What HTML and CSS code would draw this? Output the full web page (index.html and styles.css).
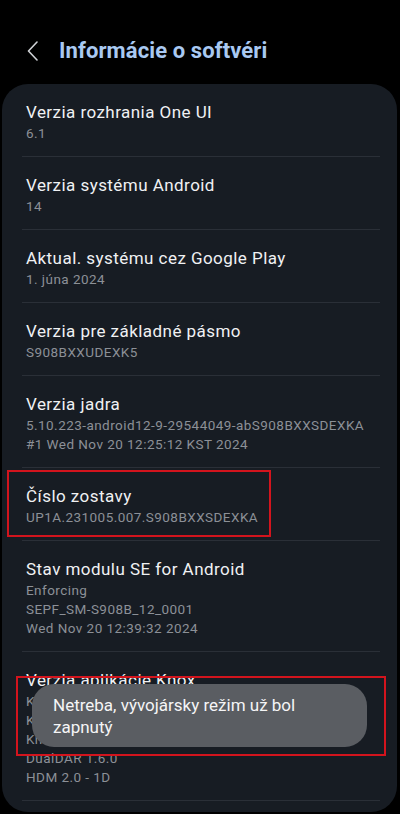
FILE: index.html
```html
<!DOCTYPE html>
<html>
<head>
    <meta charset="UTF-8">
    <meta name="viewport" content="width=device-width, initial-scale=1.0">
    <title>Informácie o softvéri</title>
    <link rel="stylesheet" href="styles.css">
</head>
<body>
    <header class="top-bar">
        <button class="back-btn" aria-label="Späť">
            <svg width="12" height="20" viewBox="0 0 12 20">
                <polyline points="10,1 1.5,10 10,19" fill="none" stroke="#cfd2d6" stroke-width="1.6" stroke-linecap="round" stroke-linejoin="round"/>
            </svg>
        </button>
        <h1 class="page-title">Informácie o softvéri</h1>
    </header>

    <div class="info-card">
        <div class="info-row">
            <div class="row-title">Verzia rozhrania One UI</div>
            <div class="row-value">6.1</div>
        </div>
        <div class="info-row">
            <div class="row-title">Verzia systému Android</div>
            <div class="row-value">14</div>
        </div>
        <div class="info-row">
            <div class="row-title">Aktual. systému cez Google Play</div>
            <div class="row-value">1. júna 2024</div>
        </div>
        <div class="info-row">
            <div class="row-title">Verzia pre základné pásmo</div>
            <div class="row-value">S908BXXUDEXK5</div>
        </div>
        <div class="info-row">
            <div class="row-title">Verzia jadra</div>
            <div class="row-value">5.10.223-android12-9-29544049-abS908BXXSDEXKA</div>
            <div class="row-value">#1 Wed Nov 20 12:25:12 KST 2024</div>
        </div>
        <div class="info-row">
            <div class="row-title">Číslo zostavy</div>
            <div class="row-value">UP1A.231005.007.S908BXXSDEXKA</div>
        </div>
        <div class="info-row">
            <div class="row-title">Stav modulu SE for Android</div>
            <div class="row-value">Enforcing</div>
            <div class="row-value">SEPF_SM-S908B_12_0001</div>
            <div class="row-value">Wed Nov 20 12:39:32 2024</div>
        </div>
        <div class="info-row">
            <div class="row-title">Verzia aplikácie Knox</div>
            <div class="row-value">Knox 3.10</div>
            <div class="row-value">Knox API level 37</div>
            <div class="row-value">Knox ML 1.5</div>
            <div class="row-value">DualDAR 1.6.0</div>
            <div class="row-value">HDM 2.0 - 1D</div>
        </div>
    </div>

    <!-- annotation boxes -->
    <div class="mark mark-build"></div>
    <div class="mark mark-toast"></div>

    <div class="toast">Netreba, vývojársky režim už bol zapnutý</div>
</body>
</html>
```

FILE: styles.css
```css
:root {
    --card-bg: #171c23;
    --divider: #2a2f37;
    --title-color: #f0f1f3;
    --value-color: #8c9097;
    --accent: #a9c9f2;
    --mark-red: #d3141d;
}

* {
    box-sizing: border-box;
    margin: 0;
    padding: 0;
}

body {
    width: 400px;
    height: 814px;
    overflow: hidden;
    position: relative;
    background-color: #000;
    font-family: Roboto, "Noto Sans", sans-serif;
}

.top-bar {
    height: 84px;
    padding: 18px 0 0 26px;
    display: flex;
    align-items: center;
}

.back-btn {
    width: 14px;
    height: 22px;
    display: flex;
    align-items: center;
    justify-content: center;
    background: none;
    border: none;
}

.page-title {
    margin-left: 19px;
    font-size: 22px;
    line-height: 22px;
    font-weight: 700;
    letter-spacing: 0.1px;
    color: var(--accent);
}

.info-card {
    margin: 0 3px 0 2px;
    padding: 0 17px 11px 20px;
    background-color: var(--card-bg);
    border-radius: 26px;
}

.info-row {
    padding: 16px 0 13px 4px;
    border-bottom: 1px solid var(--divider);
}

.row-title {
    font-size: 17px;
    line-height: 24px;
    letter-spacing: 0.45px;
    color: var(--title-color);
}

.row-value {
    font-size: 13.5px;
    line-height: 19px;
    letter-spacing: 0.45px;
    color: var(--value-color);
    white-space: nowrap;
}

.mark {
    position: absolute;
    border: 2px solid var(--mark-red);
}

.mark-build {
    left: 7px;
    top: 470px;
    width: 264px;
    height: 67px;
}

.mark-toast {
    left: 16px;
    top: 676px;
    width: 370px;
    height: 80px;
}

.toast {
    position: absolute;
    left: 32px;
    top: 684px;
    width: 335px;
    height: 63px;
    padding: 10px 40px 0 21px;
    background-color: #5a5d62;
    border-radius: 22px;
    font-size: 17px;
    line-height: 22px;
    color: #f5f5f6;
}
```
